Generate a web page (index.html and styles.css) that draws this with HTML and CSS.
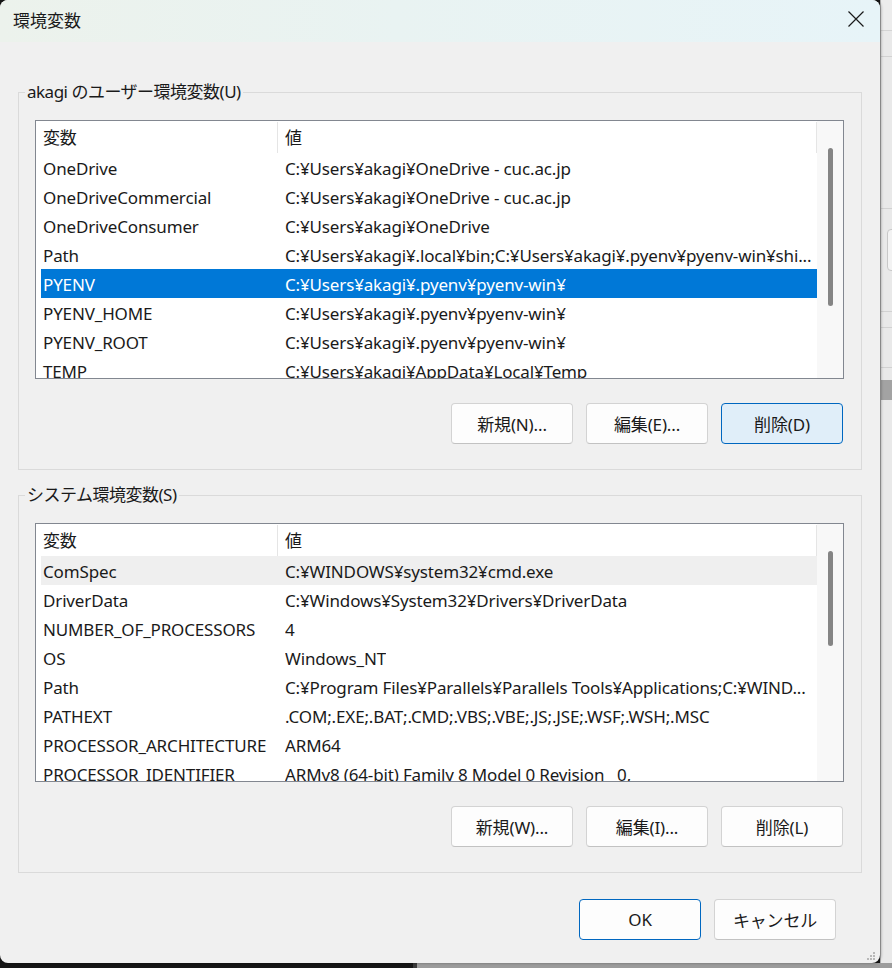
FILE: index.html
```html
<!DOCTYPE html>
<html>
<head>
    <title>環境変数</title>
    <meta charset="utf-8">
    <link rel="stylesheet" href="styles.css">
</head>
<body>
<div class="desk">
    <div class="dialog">
        <div class="titlebar">
            <span class="title">環境変数</span>
            <span class="close">
                <svg width="16" height="16" viewBox="0 0 16 16"><path d="M0.5 0.5 L15.5 15.5 M15.5 0.5 L0.5 15.5" stroke="#1a1a1a" stroke-width="1.2" fill="none"/></svg>
            </span>
        </div>
        <div class="content">
            <fieldset class="group">
                <legend>akagi のユーザー環境変数(U)</legend>
                <div class="list">
                    <div class="list-main">
                        <div class="list-head">
                            <div class="head-name">変数</div>
                            <div class="head-value">値</div>
                        </div>
                        <div class="row"><span class="name">OneDrive</span><span class="value">C:¥Users¥akagi¥OneDrive - cuc.ac.jp</span></div>
                        <div class="row"><span class="name">OneDriveCommercial</span><span class="value">C:¥Users¥akagi¥OneDrive - cuc.ac.jp</span></div>
                        <div class="row"><span class="name">OneDriveConsumer</span><span class="value">C:¥Users¥akagi¥OneDrive</span></div>
                        <div class="row"><span class="name">Path</span><span class="value">C:¥Users¥akagi¥.local¥bin;C:¥Users¥akagi¥.pyenv¥pyenv-win¥shi...</span></div>
                        <div class="row selected"><span class="name">PYENV</span><span class="value">C:¥Users¥akagi¥.pyenv¥pyenv-win¥</span></div>
                        <div class="row"><span class="name">PYENV_HOME</span><span class="value">C:¥Users¥akagi¥.pyenv¥pyenv-win¥</span></div>
                        <div class="row"><span class="name">PYENV_ROOT</span><span class="value">C:¥Users¥akagi¥.pyenv¥pyenv-win¥</span></div>
                        <div class="row"><span class="name">TEMP</span><span class="value">C:¥Users¥akagi¥AppData¥Local¥Temp</span></div>
                    </div>
                    <div class="scrollbar"><div class="thumb thumb-user"></div></div>
                </div>
                <div class="actions">
                    <button class="btn">新規(N)...</button>
                    <button class="btn">編集(E)...</button>
                    <button class="btn focused">削除(D)</button>
                </div>
            </fieldset>

            <fieldset class="group">
                <legend>システム環境変数(S)</legend>
                <div class="list">
                    <div class="list-main">
                        <div class="list-head">
                            <div class="head-name">変数</div>
                            <div class="head-value">値</div>
                        </div>
                        <div class="row hover"><span class="name">ComSpec</span><span class="value">C:¥WINDOWS¥system32¥cmd.exe</span></div>
                        <div class="row"><span class="name">DriverData</span><span class="value">C:¥Windows¥System32¥Drivers¥DriverData</span></div>
                        <div class="row"><span class="name">NUMBER_OF_PROCESSORS</span><span class="value">4</span></div>
                        <div class="row"><span class="name">OS</span><span class="value">Windows_NT</span></div>
                        <div class="row"><span class="name">Path</span><span class="value">C:¥Program Files¥Parallels¥Parallels Tools¥Applications;C:¥WIND...</span></div>
                        <div class="row"><span class="name">PATHEXT</span><span class="value">.COM;.EXE;.BAT;.CMD;.VBS;.VBE;.JS;.JSE;.WSF;.WSH;.MSC</span></div>
                        <div class="row"><span class="name">PROCESSOR_ARCHITECTURE</span><span class="value">ARM64</span></div>
                        <div class="row"><span class="name">PROCESSOR_IDENTIFIER</span><span class="value">ARMv8 (64-bit) Family 8 Model 0 Revision   0,</span></div>
                    </div>
                    <div class="scrollbar"><div class="thumb thumb-system"></div></div>
                </div>
                <div class="actions">
                    <button class="btn">新規(W)...</button>
                    <button class="btn">編集(I)...</button>
                    <button class="btn">削除(L)</button>
                </div>
            </fieldset>

            <div class="footer">
                <button class="btn default">OK</button>
                <button class="btn">キャンセル</button>
            </div>
        </div>
        <svg class="grip" width="9" height="9" viewBox="0 0 9 9">
            <rect x="6" y="0" width="2" height="2" fill="#b8b8b8"/>
            <rect x="3" y="3" width="2" height="2" fill="#b8b8b8"/>
            <rect x="6" y="3" width="2" height="2" fill="#b8b8b8"/>
            <rect x="0" y="6" width="2" height="2" fill="#b8b8b8"/>
            <rect x="3" y="6" width="2" height="2" fill="#b8b8b8"/>
            <rect x="6" y="6" width="2" height="2" fill="#b8b8b8"/>
        </svg>
    </div>
    <div class="behind">
        <div class="behind-bar"></div>
        <div class="behind-line l1"></div>
        <div class="behind-line l2"></div>
        <div class="behind-box"></div>
        <div class="behind-line l3"></div>
        <div class="behind-line l4"></div>
        <div class="behind-line l5"></div>
        <div class="behind-band"></div>
    </div>
</div>
<div class="taskbar-edge">
    <div class="edge-dark"></div>
    <div class="edge-light"></div>
</div>
</body>
</html>
```

FILE: styles.css
```css
body {
    margin: 0;
    width: 892px;
    height: 968px;
    overflow: hidden;
    background: #161616;
    font-family: "Noto Sans", "Noto Sans CJK JP", sans-serif;
    font-size: 17px;
    letter-spacing: -0.15px;
    color: #1a1a1a;
}

.desk {
    display: flex;
    height: 963px;
}

/* dialog window */
.dialog {
    position: relative;
    width: 880px;
    flex: none;
    background: #f0f0f0;
    border-radius: 8px;
    box-shadow: 1px 0 3px rgba(0, 0, 0, 0.35);
    overflow: hidden;
    z-index: 1;
}

.titlebar {
    height: 42px;
    display: flex;
    align-items: center;
    justify-content: space-between;
    padding: 0 16px 0 13px;
    background: linear-gradient(90deg, #ecf2ec 0%, #e9f3f2 45%, #e7f4f8 100%);
}

.title {
    font-size: 17px;
    letter-spacing: 0;
    padding-bottom: 4px;
}

.close {
    display: flex;
    margin-bottom: 4px;
}

.content {
    padding: 40px 18px 0 18px;
}

/* group boxes */
.group {
    margin: 0 0 15px 0;
    padding: 18px 17px 25px 16px;
    border: 1px solid #dadada;
    min-width: 0;
}

.group legend {
    margin-left: -10px;
    padding: 0 2px;
    line-height: 20px;
    letter-spacing: -0.5px;
}

.list {
    display: flex;
    height: 257px;
    border: 1px solid #828790;
    background: #fff;
    overflow: hidden;
}

.list-main {
    flex: 1;
    min-width: 0;
}

.list-head {
    display: flex;
    height: 32px;
    align-items: center;
}

.head-name {
    width: 234px;
    padding-left: 7px;
    height: 31px;
    line-height: 31px;
    border-right: 1px solid #e5e5e5;
}

.head-value {
    flex: 1;
    padding-left: 7px;
    height: 31px;
    line-height: 31px;
    border-right: 1px solid #e5e5e5;
}

.row {
    display: flex;
    height: 29px;
    line-height: 31px;
    margin-left: 5px;
    white-space: nowrap;
    overflow: hidden;
}

.row .name {
    width: 242px;
    padding-left: 2px;
    flex: none;
}

.row .value {
    overflow: hidden;
    white-space: pre;
}

.row.selected {
    background: #0078d7;
    color: #fff;
}

.row.hover {
    background: #efefef;
}

.scrollbar {
    width: 26px;
    flex: none;
    background: #f8f8f8;
    position: relative;
}

.thumb {
    position: absolute;
    left: 11px;
    width: 5px;
    border-radius: 3px;
    background: #858585;
}

.thumb-user {
    top: 27px;
    height: 158px;
}

.thumb-system {
    top: 27px;
    height: 95px;
}

/* buttons */
.actions {
    display: flex;
    justify-content: flex-end;
    gap: 13px;
    margin-top: 24px;
    padding-right: 1px;
}

.btn {
    width: 122px;
    height: 41px;
    font-family: inherit;
    font-size: 17px;
    letter-spacing: -0.15px;
    color: #1a1a1a;
    background: #fdfdfd;
    border: 1px solid #d3d3d3;
    border-bottom-color: #c2c2c2;
    border-radius: 4px;
    padding: 0;
}

.btn.focused {
    background: #e0eef9;
    border-color: #0067c0;
}

.btn.default {
    border-color: #0067c0;
}

.footer {
    display: flex;
    justify-content: flex-end;
    gap: 13px;
    margin-top: 26px;
    padding-right: 26px;
}

.grip {
    position: absolute;
    right: 4px;
    bottom: 2px;
}

/* window behind the dialog */
.behind {
    flex: 1;
    position: relative;
    background: #e9e9e9;
    border-left: 1px solid #b0b0b0;
}

.behind-bar {
    height: 30px;
    background: #ececec;
    border-bottom: 1px solid #d4d4d4;
}

.behind-line {
    position: absolute;
    left: 0;
    right: 0;
    height: 1px;
    background: #d2d2d2;
}

.behind-line.l1 { top: 56px; }
.behind-line.l2 { top: 208px; }
.behind-line.l3 { top: 311px; }
.behind-line.l4 { top: 327px; }
.behind-line.l5 { top: 367px; }

.behind-band {
    position: absolute;
    left: 0;
    right: 0;
    top: 380px;
    height: 20px;
    background: #a3a3a3;
}

.behind-box {
    position: absolute;
    left: 6px;
    top: 229px;
    width: 20px;
    height: 40px;
    border: 1px solid #c8c8c8;
    border-radius: 4px;
    background: #f3f3f3;
}

.taskbar-edge {
    display: flex;
    height: 5px;
}

.edge-dark {
    width: 413px;
    background: #161616;
    border-right: 4px solid #3a3a3a;
}

.edge-light {
    flex: 1;
    background: #9c9c9c;
}
```
